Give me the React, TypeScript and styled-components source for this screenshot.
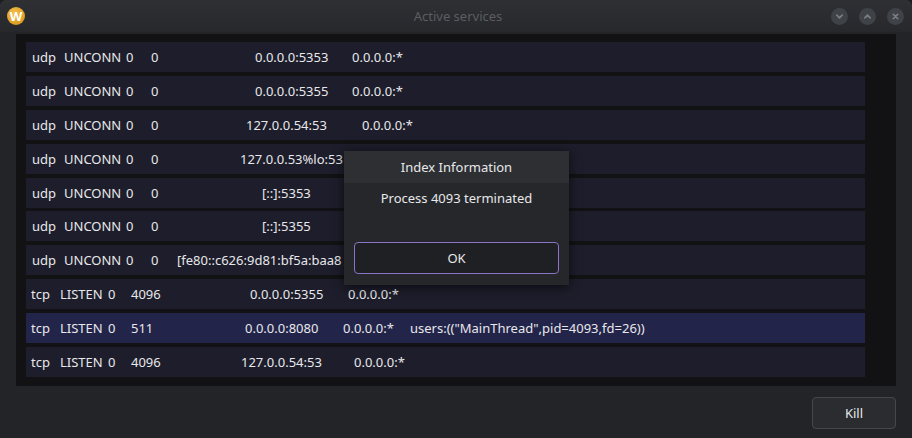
import React from 'react';
import styled, { createGlobalStyle } from 'styled-components';

const Global = createGlobalStyle`
  html, body { margin: 0; padding: 0; background: #1b1c1f; }
  body { font-family: "Noto Sans", "Open Sans", sans-serif; }
`;

type Cell = [string, number];
const udp: Cell[] = [['udp', 32], ['UNCONN', 64], ['0', 126], ['0', 151]];
const tcp = (q: string): Cell[] => [['tcp', 31], ['LISTEN', 60], ['0', 108], [q, 131]];

const rows: { cells: Cell[]; selected?: boolean }[] = [
  { cells: [...udp, ['0.0.0.0:5353', 255], ['0.0.0.0:*', 352]] },
  { cells: [...udp, ['0.0.0.0:5355', 255], ['0.0.0.0:*', 352]] },
  { cells: [...udp, ['127.0.0.54:53', 246], ['0.0.0.0:*', 362]] },
  { cells: [...udp, ['127.0.0.53%lo:53', 240]] },
  { cells: [...udp, ['[::]:5353', 262]] },
  { cells: [...udp, ['[::]:5355', 262]] },
  { cells: [...udp, ['[fe80::c626:9d81:bf5a:baa8', 177]] },
  { cells: [...tcp('4096'), ['0.0.0.0:5355', 250], ['0.0.0.0:*', 348]] },
  { selected: true, cells: [...tcp('511'), ['0.0.0.0:8080', 245], ['0.0.0.0:*', 343], ['users:(("MainThread",pid=4093,fd=26))', 410]] },
  { cells: [...tcp('4096'), ['127.0.0.54:53', 241], ['0.0.0.0:*', 354]] },
];

const Window = styled.div`
  position: relative;
  width: 912px;
  height: 438px;
  background: #232428;
  border-radius: 6px 6px 0 0;
  overflow: hidden;
  display: flex;
  flex-direction: column;
`;

const TitleBar = styled.div`
  height: 32px;
  flex: none;
  display: flex;
  align-items: center;
  padding: 0 8px 0 7px;
  background: linear-gradient(#2e3034, #26282b);
`;

const Logo = styled.div`
  width: 18px;
  height: 18px;
  border-radius: 50%;
  background: radial-gradient(circle at 40% 35%, #f3c04a, #d58e12);
  color: #fff;
  font-weight: 700;
  font-size: 13px;
  display: flex;
  align-items: center;
  justify-content: center;
`;

const Title = styled.div`
  flex: 1;
  text-align: center;
  color: #5b5d62;
  font-size: 13px;
  padding-left: 60px;
`;

const WinButtons = styled.div`
  display: flex;
  gap: 11px;
`;

const WinButton = styled.div`
  width: 17px;
  height: 17px;
  border-radius: 50%;
  background: #3f4247;
  display: flex;
  align-items: center;
  justify-content: center;
`;

const Body = styled.div`
  flex: 1;
  display: flex;
  flex-direction: column;
  padding: 2px 16px 0 16px;
`;

const List = styled.div`
  height: 344px;
  background: #121215;
  padding: 8px 31px 0 10px;
  display: flex;
  flex-direction: column;
  gap: 3.9px;
  overflow: hidden;
`;

const Row = styled.div<{ $selected?: boolean }>`
  position: relative;
  height: 30px;
  flex: none;
  background: ${(p) => (p.$selected ? '#22244a' : '#1d1d2b')};
  color: #e8e8ea;
  font-size: 13px;
`;

const Text = styled.span`
  position: absolute;
  top: 6px;
  white-space: nowrap;
`;

const Footer = styled.div`
  flex: 1;
  display: flex;
  justify-content: flex-end;
  align-items: flex-start;
  padding-top: 11px;
`;

const Button = styled.button<{ $accent?: boolean }>`
  font-family: inherit;
  font-size: 13px;
  color: #e8e8ea;
  background: ${(p) => (p.$accent ? '#1f2024' : '#2a2c30')};
  border: 1px solid ${(p) => (p.$accent ? '#8a72c4' : '#45474c')};
  border-radius: 4px;
  height: 32px;
`;

const KillButton = styled(Button)`
  width: 84px;
`;

const Dialog = styled.div`
  position: absolute;
  left: 344px;
  top: 151px;
  width: 225px;
  height: 134px;
  background: #25272b;
  box-shadow: 0 2px 10px rgba(0, 0, 0, 0.6);
  display: flex;
  flex-direction: column;
  color: #e8e8ea;
  font-size: 13px;
`;

const DialogTitle = styled.div`
  height: 32px;
  background: #2d2f33;
  display: flex;
  align-items: center;
  justify-content: center;
`;

const DialogMessage = styled.div`
  text-align: center;
  padding-top: 6px;
  height: 53px;
`;

const DialogActions = styled.div`
  padding: 0 10px;
`;

const OkButton = styled(Button)`
  width: 100%;
`;

const Glyph = ({ d }: { d: string }) => (
  <svg width="9" height="9" viewBox="0 0 10 10">
    <path d={d} stroke="#7c7f85" strokeWidth="1.8" fill="none" strokeLinecap="round" />
  </svg>
);

export default function App() {
  return (
    <>
      <Global />
      <Window>
        <TitleBar>
          <Logo>W</Logo>
          <Title>Active services</Title>
          <WinButtons>
            <WinButton><Glyph d="M2 3.5 L5 6.5 L8 3.5" /></WinButton>
            <WinButton><Glyph d="M2 6.5 L5 3.5 L8 6.5" /></WinButton>
            <WinButton><Glyph d="M2.5 2.5 L7.5 7.5 M7.5 2.5 L2.5 7.5" /></WinButton>
          </WinButtons>
        </TitleBar>
        <Body>
          <List>
            {rows.map((r, i) => (
              <Row key={i} $selected={r.selected}>
                {r.cells.map(([t, x], j) => (
                  <Text key={j} style={{ left: x - 26 }}>{t}</Text>
                ))}
              </Row>
            ))}
          </List>
          <Footer>
            <KillButton>Kill</KillButton>
          </Footer>
        </Body>
        <Dialog>
          <DialogTitle>Index Information</DialogTitle>
          <DialogMessage>Process 4093 terminated</DialogMessage>
          <DialogActions>
            <OkButton $accent>OK</OkButton>
          </DialogActions>
        </Dialog>
      </Window>
    </>
  );
}
